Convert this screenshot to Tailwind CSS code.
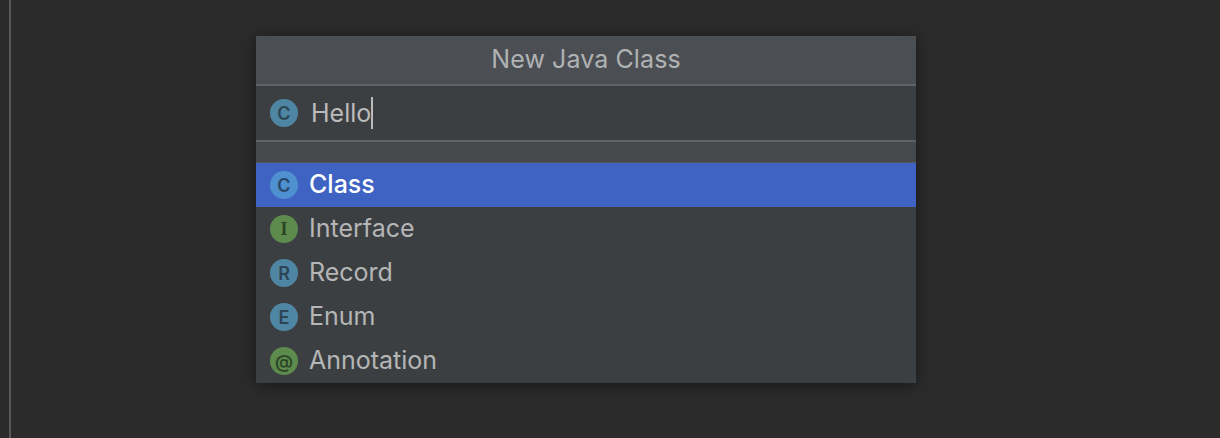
<!DOCTYPE html>
<html lang="en">
<head>
    <meta charset="UTF-8">
    <title>New Java Class</title>
    <script src="https://cdn.jsdelivr.net/npm/@tailwindcss/browser@4"></script>
</head>
<body class="bg-[#2b2b2b] font-['Inter',sans-serif] overflow-hidden">
    <div class="flex h-[438px]">
        <!-- Editor gutter line -->
        <div class="w-[11px] border-r-2 border-[#555759]"></div>

        <div class="pl-[245px] pt-[36px]">
            <div class="w-[660px] bg-[#3c3f41] shadow-[0_2px_14px_rgba(0,0,0,0.45)]">
                <!-- Title -->
                <div class="h-[50px] bg-[#4b4f53] border-b-2 border-[#606366] flex items-center justify-center text-[25px] tracking-[0.1px] text-[#b0b2b3]">New Java Class</div>

                <!-- Name input -->
                <div class="h-[56px] border-b-2 border-[#606366] flex items-center pl-[14px]">
                    <span class="w-[28px] h-[28px] rounded-full bg-[#4f86a3] flex items-center justify-center text-[#2c4656] text-[18px] font-semibold">C</span>
                    <span class="ml-[13px] text-[25px] text-[#bbbbbb] border-r-2 border-[#bbbbbb] leading-[32px]">Hello</span>
                </div>

                <!-- Spacer -->
                <div class="h-[22px] bg-[#46494b] border-b-2 border-[#565a5d]"></div>

                <!-- Kinds -->
                <ul class="text-[25px] text-[#b4b6b7]">
                    <li class="h-[44px] -mt-px bg-[#3e63c2] text-white font-medium flex items-center pl-[14px] gap-[11px]">
                        <span class="w-[28px] h-[28px] rounded-full bg-[#4f90d0] flex items-center justify-center text-[#27476b] text-[18px] font-semibold">C</span>
                        Class
                    </li>
                    <li class="h-[44px] flex items-center pl-[14px] gap-[11px]">
                        <span class="w-[28px] h-[28px] rounded-full bg-[#5d8b4d] flex items-center justify-center text-[#2c4527] text-[18px] font-semibold font-['Liberation_Serif',serif]">I</span>
                        Interface
                    </li>
                    <li class="h-[44px] flex items-center pl-[14px] gap-[11px]">
                        <span class="w-[28px] h-[28px] rounded-full bg-[#4f86a3] flex items-center justify-center text-[#2c4656] text-[18px] font-semibold">R</span>
                        Record
                    </li>
                    <li class="h-[44px] flex items-center pl-[14px] gap-[11px]">
                        <span class="w-[28px] h-[28px] rounded-full bg-[#4f86a3] flex items-center justify-center text-[#2c4656] text-[18px] font-semibold">E</span>
                        Enum
                    </li>
                    <li class="h-[44px] flex items-center pl-[14px] gap-[11px]">
                        <span class="w-[28px] h-[28px] rounded-full bg-[#5d8b4d] flex items-center justify-center text-[#2c4527] text-[18px] font-semibold">@</span>
                        Annotation
                    </li>
                </ul>
            </div>
        </div>
    </div>
</body>
</html>
